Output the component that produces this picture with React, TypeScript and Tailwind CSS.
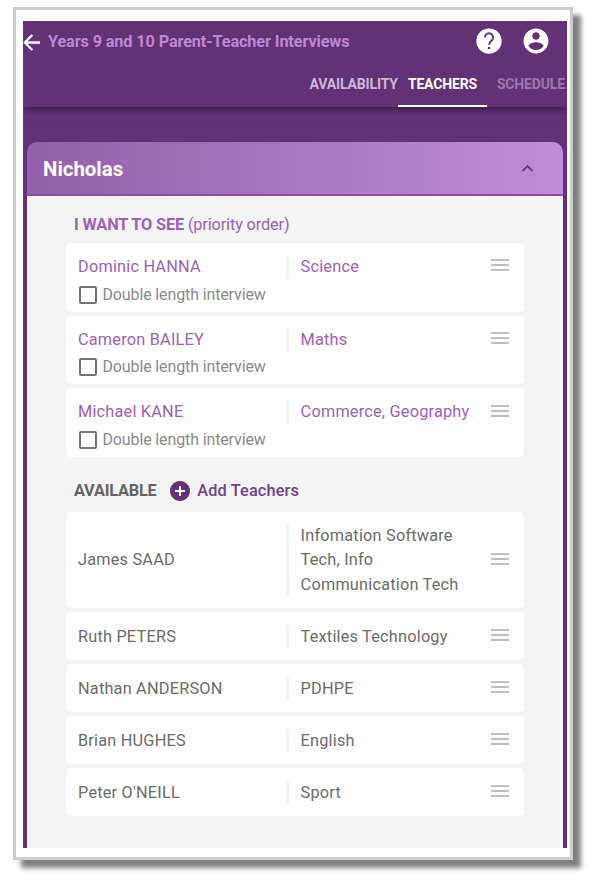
import { useState } from 'react'
import { MdAddCircle, MdCheckBoxOutlineBlank, MdKeyboardArrowUp } from 'react-icons/md'

interface Teacher {
  name: string
  subjects: string
}

const wanted: Teacher[] = [
  { name: 'Dominic HANNA', subjects: 'Science' },
  { name: 'Cameron BAILEY', subjects: 'Maths' },
  { name: 'Michael KANE', subjects: 'Commerce, Geography' },
]

const available: Teacher[] = [
  { name: 'James SAAD', subjects: 'Infomation Software Tech, Info Communication Tech' },
  { name: 'Ruth PETERS', subjects: 'Textiles Technology' },
  { name: 'Nathan ANDERSON', subjects: 'PDHPE' },
  { name: 'Brian HUGHES', subjects: 'English' },
  { name: "Peter O'NEILL", subjects: 'Sport' },
]

function BackIcon() {
  return (
    <svg viewBox="0 0 17 17" fill="none" stroke="currentColor" strokeWidth="2.3" className="size-[17px]">
      <path d="M17 8.5H2M9.3 1 1.8 8.5l7.5 7.5" />
    </svg>
  )
}

function HelpIcon() {
  return (
    <svg viewBox="0 0 24 24" className="-mt-[3px] ml-auto size-[30px]">
      <circle cx="12" cy="12" r="10.1" fill="#fff" />
      <path
        d="M8.7 9.2a3.3 3.3 0 1 1 5.5 2.4c-1.1 1-2.1 1.5-2.1 3.3"
        fill="none"
        stroke="#623277"
        strokeWidth="1.5"
      />
      <circle cx="12" cy="17.6" r="1" fill="#623277" />
    </svg>
  )
}

function AccountIcon() {
  return (
    <svg viewBox="0 0 24 24" fill="currentColor" className="-mt-[3px] ml-[17px] mr-[16.5px] size-[30px]">
      <path d="M12 2C6.48 2 2 6.48 2 12s4.48 10 10 10 10-4.48 10-10S17.52 2 12 2zm0 3c1.66 0 3 1.34 3 3s-1.34 3-3 3-3-1.34-3-3 1.34-3 3-3zm0 14.2c-2.5 0-4.71-1.28-6-3.22.03-1.99 4-3.08 6-3.08 1.99 0 5.97 1.09 6 3.08-1.29 1.94-3.5 3.22-6 3.22z" />
    </svg>
  )
}

function DragHandle() {
  return (
    <div className="-mt-[3.6px] flex w-[18px] shrink-0 flex-col gap-[3px]">
      <span className="h-[2px] bg-[#c0c0c0]" />
      <span className="h-[2px] bg-[#c0c0c0]" />
      <span className="h-[2px] bg-[#c0c0c0]" />
    </div>
  )
}

function TeacherInfo({ teacher }: { teacher: Teacher }) {
  return (
    <div className="flex items-center text-[16.3px] leading-[24.4px] tracking-[0.21px]">
      <div className="w-[208px] shrink-0">{teacher.name}</div>
      <div className="w-[205px] shrink-0 border-l-[3px] border-[#f4f4f4] pl-[11.6px] pr-[12px]">{teacher.subjects}</div>
      <DragHandle />
    </div>
  )
}

function WantedRow({ teacher }: { teacher: Teacher }) {
  const [double, setDouble] = useState(false)

  return (
    <div className="h-[68.6px] rounded-[5px] bg-white pl-[12px] pt-[12px] text-[#9a62b3]">
      <TeacherInfo teacher={teacher} />
      <button
        type="button"
        onClick={() => setDouble(!double)}
        className="mt-[3.2px] flex h-[24px] items-center text-[16px] leading-[24px] tracking-[-0.13px] text-[#8a8a8a]"
      >
        <MdCheckBoxOutlineBlank className="-ml-[2.4px] mr-[2.9px] size-[24px] text-[#757575]" />
        Double length interview
      </button>
    </div>
  )
}

export default function App() {
  return (
    <div className="h-[880px] w-[590px] overflow-hidden bg-white pl-[13px] pt-[7px] font-['Roboto',sans-serif]">
      <div className="h-[853px] w-[560px] border-[3px] border-[#cdcdcd] bg-white pl-[7px] pt-[11px] shadow-[8px_8px_5px_#808080]">
        <div className="flex h-[827px] w-[544px] flex-col overflow-hidden bg-[#623277]">
          <header className="h-[86px] shrink-0 shadow-[0_2px_8px_rgba(0,0,0,0.5)]">
            <div className="flex h-[42px] items-center text-white">
              <BackIcon />
              <h1 className="ml-[8px] text-[16.3px] font-bold tracking-[-0.13px] text-[#be86d6]">Years 9 and 10 Parent-Teacher Interviews</h1>
              <HelpIcon />
              <AccountIcon />
            </div>
            <nav className="flex h-[44px] justify-end text-[14px] font-bold leading-[42px] tracking-[-0.15px]">
              <span className="text-[#cbb8d3]">AVAILABILITY</span>
              <span className="w-[89px] border-b-2 border-white pl-[10px] text-white">TEACHERS</span>
              <span className="pl-[10px] pr-[2px] text-[#9877a6]">SCHEDULE</span>
            </nav>
          </header>

          <section className="mx-[4px] mt-[35.4px] flex grow flex-col">
            <div className="flex h-[53.6px] items-center justify-between rounded-t-[10px] border-b-2 border-[#85549b] bg-linear-to-r from-[#9260a9] to-[#c28cda] pl-[16px] pr-[24px]">
              <h2 className="pt-[2px] text-[20.4px] font-bold text-white">Nicholas</h2>
              <MdKeyboardArrowUp className="mt-px size-[23px] text-[#5c426a]" />
            </div>

            <div className="grow bg-[#f4f4f4] pl-[39px] pt-[17px]">
              <h3 className="pl-[8px] text-[16.3px] leading-[24px] tracking-[-0.13px] text-[#9a62b3]">
                <b>I WANT TO SEE</b> (priority order)
              </h3>
              <div className="mt-[6.1px] flex w-[458px] flex-col gap-[4px]">
                {wanted.map((t) => (
                  <WantedRow key={t.name} teacher={t} />
                ))}
              </div>

              <div className="mt-[21.9px] flex h-[24px] items-center pl-[8px] text-[16.3px] leading-[24px]">
                <span className="font-bold tracking-[-0.2px] text-[#646464]">AVAILABLE</span>
                <MdAddCircle className="ml-[11.4px] size-[24px] text-[#623277]" />
                <span className="ml-[5.4px] font-medium tracking-[0.15px] text-[#6f4285]">Add Teachers</span>
              </div>
              <div className="mt-[8.8px] flex w-[458px] flex-col gap-[4px] text-[#6b6b6b]">
                {available.map((t) => (
                  <div key={t.name} className="rounded-[5px] bg-white pb-[11.2px] pl-[12px] pt-[12.4px]">
                    <TeacherInfo teacher={t} />
                  </div>
                ))}
              </div>
            </div>
          </section>
        </div>
      </div>
    </div>
  )
}
